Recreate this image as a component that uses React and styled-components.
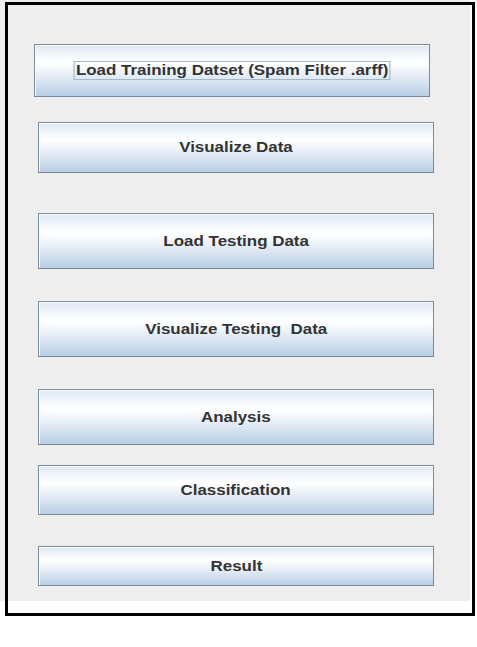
import styled, { createGlobalStyle } from "styled-components";

const GlobalStyle = createGlobalStyle`
    html, body {
        margin: 0;
        padding: 0;
        background: #ffffff;
    }
`;

const Screen = styled.div`
    position: relative;
    width: 477px;
    height: 647px;
    background: #ffffff;
`;

const Panel = styled.div`
    width: 470px;
    height: 601px;
    background: #eeeeee;
    display: flex;
    flex-direction: column;
    align-items: flex-start;
    padding-top: 44px;
    box-sizing: border-box;
`;

// black outline drawn over the window edge
const Frame = styled.div`
    position: absolute;
    left: 5px;
    top: 2px;
    width: 470px;
    height: 614px;
    border: 3px solid #000000;
    box-sizing: border-box;
    pointer-events: none;
`;

const MetalButton = styled.button`
    display: flex;
    align-items: center;
    justify-content: center;
    box-sizing: border-box;
    width: 396px;
    height: ${(p) => p.$h}px;
    margin: ${(p) => p.$gap}px 0 0 ${(p) => p.$left}px;
    padding: 0;
    border: 1px solid #7a8a99;
    box-shadow: inset 1px 1px 0 #ffffff;
    background: linear-gradient(
        to bottom,
        #dde8f3 0%,
        #f4f8fc 22%,
        #ffffff 36%,
        #e8eff7 58%,
        #b8cfe5 100%
    );
    cursor: pointer;
    color: #333333;
    font-family: "Liberation Sans", Arial, sans-serif;
    font-weight: bold;
    font-size: 14px;
`;

const Label = styled.span`
    display: inline-block;
    white-space: pre;
    line-height: 17px;
    transform: scaleX(1.21);
    padding: 0 1px;
    border: 1px solid ${(p) => (p.$focused ? "#a3b8cc" : "transparent")};
`;

const actions = [
    { label: "Load Training Datset (Spam Filter .arff)", h: 53, gap: 0, left: 34, focused: true },
    { label: "Visualize Data", h: 51, gap: 25, left: 38 },
    { label: "Load Testing Data", h: 56, gap: 40, left: 38 },
    { label: "Visualize Testing  Data", h: 56, gap: 32, left: 38 },
    { label: "Analysis", h: 56, gap: 32, left: 38 },
    { label: "Classification", h: 50, gap: 20, left: 38 },
    { label: "Result", h: 40, gap: 31, left: 38 },
];

export default function App() {
    return (
        <>
            <GlobalStyle />
            <Screen>
                <Panel>
                    {actions.map((a) => (
                        <MetalButton key={a.label} $h={a.h} $gap={a.gap} $left={a.left}>
                            <Label $focused={a.focused}>{a.label}</Label>
                        </MetalButton>
                    ))}
                </Panel>
                <Frame />
            </Screen>
        </>
    );
}
